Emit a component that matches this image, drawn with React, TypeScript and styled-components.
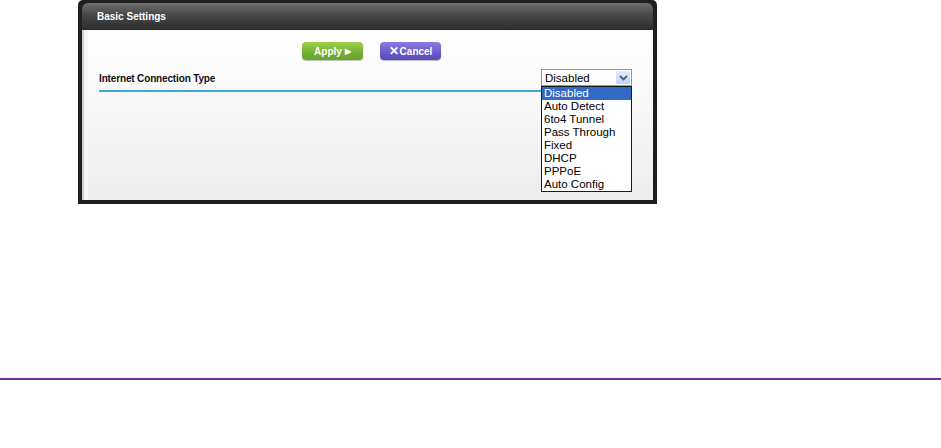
import styled, { createGlobalStyle } from "styled-components";

const GlobalStyle = createGlobalStyle`
  html, body {
    margin: 0;
    padding: 0;
    background: #fff;
  }
  body {
    font-family: "Liberation Sans", Arial, sans-serif;
  }
`;

const options = [
  "Disabled",
  "Auto Detect",
  "6to4 Tunnel",
  "Pass Through",
  "Fixed",
  "DHCP",
  "PPPoE",
  "Auto Config",
];

const App = () => {
  return (
    <Page>
      <GlobalStyle />
      <Panel>
        <Header>Basic Settings</Header>
        <Body>
          <ButtonRow>
            <ApplyButton>
              Apply <span>▶</span>
            </ApplyButton>
            <CancelButton>
              <span>✕</span>Cancel
            </CancelButton>
          </ButtonRow>
          <FieldRow>
            <Label>Internet Connection Type</Label>
            <SelectWrap>
              <SelectBox>
                <span>Disabled</span>
                <Arrow>
                  <svg width="9" height="6" viewBox="0 0 9 6">
                    <path
                      d="M1 1 L4.5 4.5 L8 1"
                      fill="none"
                      stroke="#4d6185"
                      strokeWidth="1.8"
                    />
                  </svg>
                </Arrow>
              </SelectBox>
              <OptionList>
                {options.map((o, i) => (
                  <Option key={o} selected={i === 0}>
                    {o}
                  </Option>
                ))}
              </OptionList>
            </SelectWrap>
          </FieldRow>
          <Rule />
        </Body>
      </Panel>
      <Divider />
    </Page>
  );
};

export default App;

const Page = styled.div`
  width: 941px;
  height: 448px;
  position: relative;
`;

const Panel = styled.div`
  margin-left: 78px;
  width: 571px;
  height: 197px;
  background: #1f1f1f;
  padding: 3px 4px 4px 4px;
  border-radius: 5px 5px 0 0;
  display: flex;
  flex-direction: column;
`;

const Header = styled.div`
  height: 27px;
  flex-shrink: 0;
  background: linear-gradient(#6e6e6e, #4a4a4a 40%, #2c2c2c);
  border-radius: 6px 6px 0 0;
  color: #fff;
  font-weight: bold;
  font-size: 10px;
  line-height: 27px;
  padding-left: 15px;
  box-sizing: border-box;
`;

const Body = styled.div`
  flex: 1;
  background: linear-gradient(#ffffff, #f9f9f9 40%, #ececec);
  border-left: 2px solid #cfcfcf;
  box-shadow: inset 4px 0 0 #f6f6f6;
  position: relative;
`;

const ButtonRow = styled.div`
  display: flex;
  gap: 17px;
  padding: 12px 0 0 218px;
`;

const BaseButton = styled.div`
  width: 61px;
  height: 18px;
  border-radius: 4px;
  color: #fff;
  font-weight: bold;
  font-size: 10px;
  display: flex;
  align-items: center;
  justify-content: center;
  gap: 3px;
  box-shadow: 0 1px 1px rgba(0, 0, 0, 0.25);
  span {
    font-size: 8px;
  }
`;

const ApplyButton = styled(BaseButton)`
  background: linear-gradient(#9dd14b, #78b335 55%, #66a12a);
`;

const CancelButton = styled(BaseButton)`
  background: linear-gradient(#8b7de0, #6d5ccb 55%, #5a4ab6);
  gap: 1px;
  span {
    font-size: 12px;
  }
`;

const FieldRow = styled.div`
  display: flex;
  align-items: center;
  justify-content: space-between;
  padding: 9px 21px 0 15px;
  height: 17px;
`;

const Label = styled.div`
  font-weight: bold;
  font-size: 10px;
  letter-spacing: -0.15px;
  color: #111;
  padding-top: 2px;
`;

const SelectWrap = styled.div`
  position: relative;
  width: 91px;
`;

const SelectBox = styled.div`
  height: 17px;
  box-sizing: border-box;
  border: 1px solid #7f9db9;
  background: #fff;
  display: flex;
  align-items: center;
  justify-content: space-between;
  padding: 0 1px 0 3px;
  font-size: 11.5px;
  color: #000;
`;

const Arrow = styled.div`
  width: 14px;
  height: 13px;
  background: linear-gradient(#e3ecfc, #c3d3f5);
  border-radius: 1px;
  display: flex;
  align-items: center;
  justify-content: center;
`;

const OptionList = styled.div`
  position: absolute;
  top: 17px;
  left: 0;
  width: 91px;
  box-sizing: border-box;
  border: 1px solid #1c1c1c;
  background: #fff;
  z-index: 2;
`;

const Option = styled.div<{ selected?: boolean }>`
  height: 13px;
  line-height: 13px;
  font-size: 11.5px;
  padding-left: 2px;
  background: ${(p) => (p.selected ? "#316ac5" : "#fff")};
  color: ${(p) => (p.selected ? "#fff" : "#000")};
  white-space: nowrap;
`;

const Rule = styled.div`
  margin: 4px 21px 0 15px;
  height: 2px;
  background: #3aa8de;
`;

const Divider = styled.div`
  margin-top: 174px;
  height: 2px;
  background: #6a2e96;
`;
